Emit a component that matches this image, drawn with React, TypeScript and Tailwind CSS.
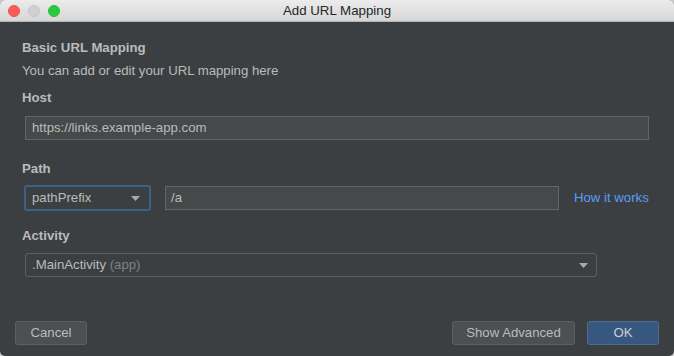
import React from "react";

function Arrow() {
  return (
    <svg width="9" height="5" viewBox="0 0 9 5" className="shrink-0">
      <path d="M0 0 H9 L4.5 5 Z" fill="#a9a9a9" />
    </svg>
  );
}

export default function App() {
  const font = { fontFamily: '"Liberation Sans", Arial, sans-serif' };
  return (
    <div className="w-[674px] h-[356px] bg-[#cfcfcf]" style={font}>
      <div className="w-full h-full flex flex-col rounded-[5px] overflow-hidden bg-[#3c3f41]">
        {/* Title bar */}
        <div className="relative h-[22px] shrink-0 bg-gradient-to-b from-[#ececec] to-[#d6d6d6] border-b border-[#b4b4b4] flex items-center justify-center">
          <div className="absolute left-[8px] top-[5px] flex gap-[8px]">
            <span className="w-[12px] h-[12px] rounded-full bg-[#fc5b57] border border-[#e8534e]" />
            <span className="w-[12px] h-[12px] rounded-full bg-[#d0d0d0] border border-[#c6c6c6]" />
            <span className="w-[12px] h-[12px] rounded-full bg-[#2ac940] border border-[#24be38]" />
          </div>
          <span className="text-[13.3px] text-[#262626] leading-none">Add URL Mapping</span>
        </div>

        {/* Body */}
        <div className="flex-1 flex flex-col pl-[22px] pr-[25px] pt-[18px] text-[13.2px] leading-[16px] text-[#bbbbbb]">
          <div className="font-bold">Basic URL Mapping</div>
          <div className="mt-[7px]">You can add or edit your URL mapping here</div>
          <div className="font-bold mt-[11px]">Host</div>
          <div className="mt-[10px] ml-[3px] h-[24px] bg-[#45494a] border border-[#646464] flex items-center px-[6px]">
            https://links.example-app.com
          </div>

          <div className="font-bold mt-[21px]">Path</div>
          <div className="mt-[8px] flex items-center">
            <div className="ml-[2px] w-[127px] h-[26px] rounded-[3px] border-2 border-[#3d6185] bg-[#3c3f41] flex items-center justify-between pl-[6px] pr-[9px]">
              <span>pathPrefix</span>
              <Arrow />
            </div>
            <div className="ml-[14px] w-[394px] h-[24px] bg-[#45494a] border border-[#646464] flex items-center px-[5px]">
              /a
            </div>
            <span className="ml-[15px] text-[#589df6]">How it works</span>
          </div>

          <div className="font-bold mt-[17px]">Activity</div>
          <div className="mt-[9px] ml-[3px] w-[572px] h-[24px] rounded-[3px] border border-[#5e6060] bg-[#3c3f41] flex items-center justify-between pl-[6px] pr-[8px]">
            <span>
              .MainActivity <span className="text-[#808080]">(app)</span>
            </span>
            <Arrow />
          </div>
        </div>

        {/* Buttons */}
        <div className="flex items-center pl-[15px] pr-[15px] pb-[11px] text-[13.2px] text-[#bbbbbb]">
          <button className="w-[72px] h-[24px] rounded-[3px] border border-[#5e6060] bg-[#4c5052]">
            Cancel
          </button>
          <div className="flex-1" />
          <button className="w-[123px] h-[24px] rounded-[3px] border border-[#5e6060] bg-[#4c5052]">
            Show Advanced
          </button>
          <button className="ml-[12px] w-[72px] h-[24px] rounded-[3px] border border-[#4c708c] bg-[#365880] text-[#d0d0d0]">
            OK
          </button>
        </div>
      </div>
    </div>
  );
}
